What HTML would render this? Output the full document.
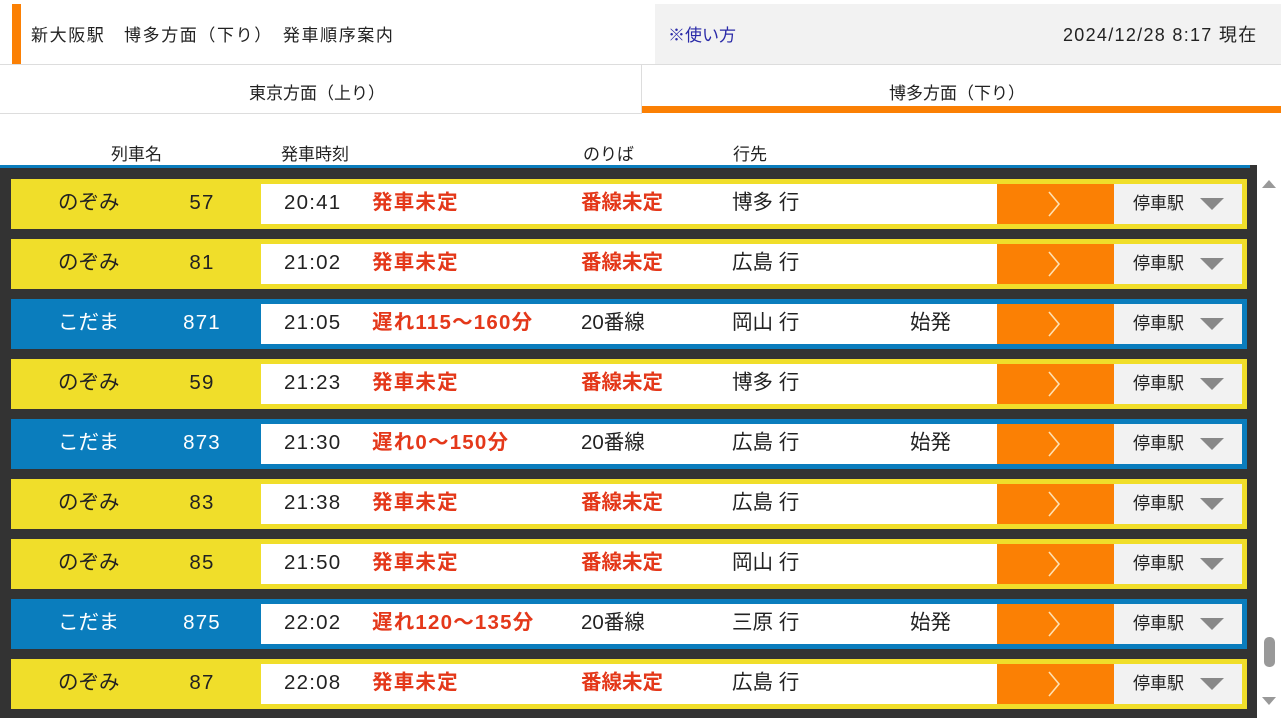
<!DOCTYPE html>
<html><head><meta charset="utf-8"><style>
*{margin:0;padding:0;box-sizing:border-box}
body{width:1281px;height:718px;overflow:hidden;background:#fff;font-family:"Liberation Sans","Noto Sans CJK JP",sans-serif;color:#222;position:relative}
.a{position:absolute;white-space:nowrap}
.row{position:absolute;left:11px;width:1236px;height:50px}
.row .in{position:absolute;left:250px;top:5px;width:981px;height:40px;background:#fff}
.row .or{position:absolute;left:986px;top:5px;width:117px;height:40px;background:#fb8004}
.row .gr{position:absolute;left:1103px;top:5px;width:128px;height:40px;background:#f2f2f2}
.row span{position:absolute;top:11px;font-size:20.5px;line-height:26px;white-space:nowrap}
.dg{letter-spacing:1.2px}
.y{background:#f0de2a}.b{background:#0a7dbd}
.b .nm,.b .no{color:#fff}
.red{color:#e4381a;font-weight:bold}
</style></head><body>
<div class="a" style="left:12px;top:4px;width:9px;height:60px;background:#fb8004"></div>
<div class="a" style="left:31px;top:21px;font-size:17px;letter-spacing:1.6px">新大阪駅　博多方面（下り）　発車順序案内</div>
<div class="a" style="left:655px;top:4px;width:626px;height:60px;background:#f2f2f2"></div>
<div class="a" style="left:668px;top:21px;font-size:17px;color:#2a2aa8">※使い方</div>
<div class="a" style="left:1063px;top:21px;font-size:18px;letter-spacing:1.3px">2024/12/28 8:17 現在</div>
<div class="a" style="left:0;top:64px;width:1281px;height:1px;background:#ddd"></div>
<div class="a" style="left:0;top:113px;width:642px;height:1px;background:#ddd"></div>
<div class="a" style="left:641px;top:65px;width:1px;height:48px;background:#ddd"></div>
<div class="a" style="left:249px;top:79px;font-size:17px">東京方面（上り）</div>
<div class="a" style="left:889px;top:79px;font-size:17px">博多方面（下り）</div>
<div class="a" style="left:642px;top:106px;width:639px;height:7px;background:#fb8004"></div>
<div class="a" style="left:111px;top:140px;font-size:17px">列車名</div>
<div class="a" style="left:281px;top:140px;font-size:17px">発車時刻</div>
<div class="a" style="left:583px;top:140px;font-size:17px">のりば</div>
<div class="a" style="left:733px;top:140px;font-size:17px">行先</div>
<div class="a" style="left:0;top:165px;width:1257px;height:553px;background:#333"></div>
<div class="a" style="left:0;top:165px;width:1250px;height:3px;background:#0a7dbd"></div>
<div class="a" style="left:1262px;top:180px;width:0;height:0;border-left:7px solid transparent;border-right:7px solid transparent;border-bottom:8px solid #999"></div>
<div class="a" style="left:1264px;top:637px;width:11px;height:30px;border-radius:5px;background:#999"></div>
<div class="a" style="left:1262px;top:697px;width:0;height:0;border-left:7px solid transparent;border-right:7px solid transparent;border-top:8px solid #999"></div>
<div id="rows"></div>
<script>
var d=[["y","のぞみ","57","20:41","発車未定",1,"博多 行",""],
["y","のぞみ","81","21:02","発車未定",1,"広島 行",""],
["b","こだま","871","21:05","遅れ115～160分",0,"岡山 行","始発"],
["y","のぞみ","59","21:23","発車未定",1,"博多 行",""],
["b","こだま","873","21:30","遅れ0～150分",0,"広島 行","始発"],
["y","のぞみ","83","21:38","発車未定",1,"広島 行",""],
["y","のぞみ","85","21:50","発車未定",1,"岡山 行",""],
["b","こだま","875","22:02","遅れ120～135分",0,"三原 行","始発"],
["y","のぞみ","87","22:08","発車未定",1,"広島 行",""]];
var h="";
d.forEach(function(r,i){
h+='<div class="row '+r[0]+'" style="top:'+(179+60*i)+'px"><div class="in"></div><div class="or"></div><div class="gr"></div>'+
'<span class="nm" style="left:47px">'+r[1]+'</span><span class="no dg" style="left:191px;width:0;"><i style="position:absolute;left:0;transform:translateX(-50%);font-style:normal">'+r[2]+'</i></span>'+
'<span class="dg" style="left:273px">'+r[3]+'</span><span class="red dg" style="left:361px">'+r[4]+'</span>'+
'<span class="'+(r[5]?'red':'')+'" style="left:570px">'+(r[5]?'番線未定':'20番線')+'</span>'+
'<span style="left:721px">'+r[6]+'</span><span style="left:899px">'+r[7]+'</span>'+
'<svg style="position:absolute;left:1036px;top:12px" width="14" height="26"><path d="M2 1 L12 13 L2 25" fill="none" stroke="#ffe0b0" stroke-width="1.6"/></svg>'+
'<span style="left:1122px;font-size:17px;top:12px">停車駅</span>'+
'<div style="position:absolute;left:1189px;top:19px;width:0;height:0;border-left:12px solid transparent;border-right:12px solid transparent;border-top:12px solid #888"></div></div>';
});
document.getElementById("rows").innerHTML=h;
</script>
</body></html>
